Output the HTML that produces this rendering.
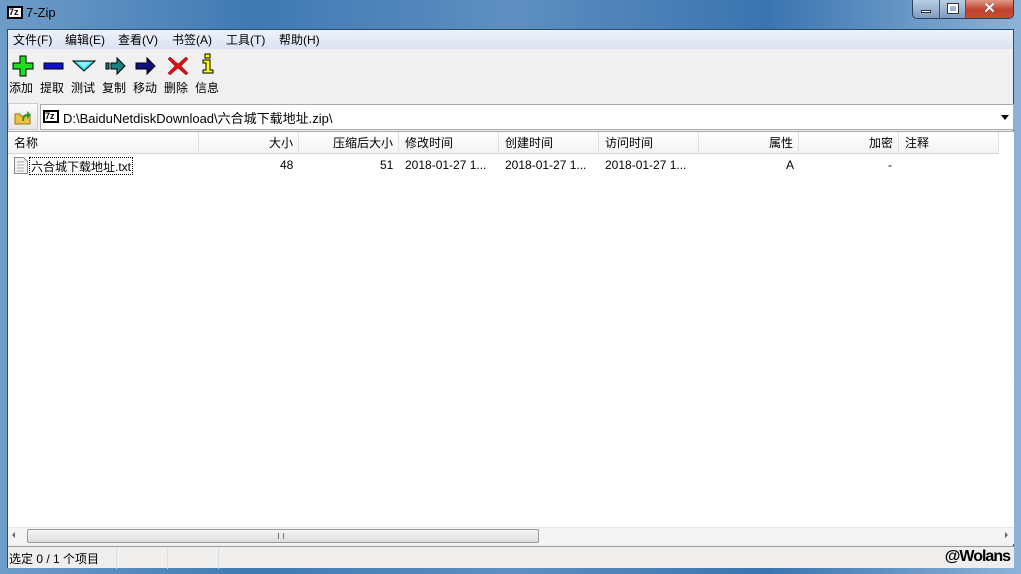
<!DOCTYPE html>
<html><head><meta charset="utf-8"><style>
*{margin:0;padding:0;box-sizing:border-box}
body{width:1021px;height:574px;overflow:hidden;font-family:"Liberation Sans","Noto Sans CJK SC",sans-serif;font-size:12px;color:#000;background:#5a8bbd;position:relative}
.frame{position:absolute;left:0;top:0;width:1021px;height:574px;background:linear-gradient(90deg,#6d9cc9 0%,#3f79b3 25%,#5e8fc0 50%,#3a74b0 75%,#8db3d8 100%)}
.title{position:absolute;left:26px;top:5px;font-size:13px;color:#000}
.client{position:absolute;left:7px;top:29px;width:1007px;height:539px;background:#f0f0f0;border:1px solid #2c4a6e}
.menu{position:absolute;left:0;top:0;width:100%;height:19px;background:linear-gradient(#eef2fa,#dbe2f2);}
.menu span{position:absolute;top:1px}
.tb span{position:absolute;top:49px;font-size:12px}
.addr{position:absolute;left:32px;top:74px;width:974px;height:26px;background:#fff;border:1px solid #aaa}
.list{position:absolute;left:0;top:101px;width:1006px;height:397px;background:#fff;border-top:1px solid #aaa}
.hdr{position:absolute;left:0;top:0;width:990px;height:22px;background:linear-gradient(#fff,#f3f3f3);border-bottom:1px solid #d5d5d5}
.hdr div{position:absolute;top:2px;height:16px;white-space:nowrap}
.row div{position:absolute;top:3px;height:16px;white-space:nowrap}
.sep{position:absolute;top:0;width:1px;height:22px;background:#e0e0e0}
.status{position:absolute;left:0;top:516px;width:1006px;height:22px;background:#f0eeec;border-top:1px solid #999}
</style></head><body>
<div class="frame"></div>
<div style="position:absolute;left:7px;top:6px;width:16px;height:13px;background:#000;border:1px solid #000"><div style="position:absolute;left:1px;top:1px;width:12px;height:9px;background:#fff;font:bold 9px 'Liberation Sans';line-height:9px;color:#000">7z</div></div>
<div class="title">7-Zip</div>
<div style="position:absolute;left:912px;top:0;width:102px;height:19px;border:1px solid #2a3f5c;border-top:none;border-radius:0 0 5px 5px;overflow:hidden;display:flex">
<div style="width:27px;background:linear-gradient(#b9cde4,#7e9cc0);border-right:1px solid #3b5575;position:relative"><div style="position:absolute;left:8px;top:10px;width:10px;height:3px;background:#fff;border:1px solid #333"></div></div>
<div style="width:26px;background:linear-gradient(#b9cde4,#7e9cc0);border-right:1px solid #3b5575;position:relative"><div style="position:absolute;left:8px;top:4px;width:10px;height:9px;border:2px solid #fff;outline:1px solid #333"></div></div>
<div style="flex:1;background:linear-gradient(#e19a86,#c0412a 55%,#c84c34);color:#fff;font:bold 15px 'Liberation Sans';text-align:center;line-height:18px;text-shadow:0 0 1px #333">✕</div></div>
<div class="client">
<div class="menu"><span style="left:5px">文件(F)</span><span style="left:57px">编辑(E)</span><span style="left:110px">查看(V)</span><span style="left:164px">书签(A)</span><span style="left:218px">工具(T)</span><span style="left:271px">帮助(H)</span></div>
<div class="tb">
<svg style="position:absolute;left:4px;top:25px" width="22" height="22"><path d="M8 1h6v7h7v6h-7v7h-6v-7h-7v-6h7z" fill="#1ee01e" stroke="#000"/></svg>
<svg style="position:absolute;left:35px;top:25px" width="22" height="22"><rect x="1" y="8" width="19" height="6" fill="#1010d0" stroke="#000"/></svg>
<svg style="position:absolute;left:64px;top:25px" width="24" height="22"><path d="M1 6h22l-11 10z" fill="#20e0f0" stroke="#000"/><path d="M5 7h14l-7 6z" fill="#fff" opacity=".5"/></svg>
<svg style="position:absolute;left:97px;top:25px" width="22" height="22"><rect x="1" y="8" width="3" height="6" fill="#1a7a7a" stroke="#000"/><path d="M6 8h6v-5l8 8-8 8v-5h-6z" fill="#1a8080" stroke="#000"/></svg>
<svg style="position:absolute;left:127px;top:25px" width="22" height="22"><path d="M1 8h11v-5l8 8-8 8v-5h-11z" fill="#101080" stroke="#000"/></svg>
<svg style="position:absolute;left:159px;top:25px" width="22" height="22"><path d="M3 2l8 7 8-7 2 2-7 7 7 7-2 2-8-7-8 7-2-2 7-7-7-7z" fill="#e01010" stroke="#600" stroke-width=".5"/></svg>
<svg style="position:absolute;left:193px;top:23px" width="14" height="22"><rect x="4" y="1" width="5" height="4" fill="#ff0" stroke="#000"/><path d="M2 7h7v10h3v3h-10v-3h3v-7h-3z" fill="#ff0" stroke="#000"/></svg>
<span style="left:1px">添加</span><span style="left:32px">提取</span><span style="left:63px">测试</span><span style="left:94px">复制</span><span style="left:125px">移动</span><span style="left:156px">删除</span><span style="left:187px">信息</span></div>
<div style="position:absolute;left:0;top:73px;width:30px;height:27px;background:linear-gradient(#fafafa,#e6e6e6);border:1px solid #ccc"><svg style="position:absolute;left:5px;top:5px" width="18" height="16"><path d="M1 5h5l1 2h9v8h-15z" fill="#f0c040" stroke="#a07010"/><path d="M8 12c0-5 2-7 5-7v-3l4 4-4 4v-3c-2 0-3 2-3 5z" fill="#2a9a2a"/></svg></div>
<div class="addr"><div style="position:absolute;left:2px;top:5px;width:16px;height:13px;background:#000"><div style="position:absolute;left:2px;top:2px;width:12px;height:9px;background:#fff;font:bold 9px 'Liberation Sans';line-height:9px">7z</div></div><div style="position:absolute;left:22px;top:3px;font-size:13px">D:\BaiduNetdiskDownload\六合城下载地址.zip\</div><div style="position:absolute;right:4px;top:10px;border:4px solid transparent;border-top:5px solid #000;border-bottom:none"></div></div>
<div class="list">
<div class="hdr"><div style="left:6px">名称</div><div style="left:261px">大小</div><div style="left:325px">压缩后大小</div><div style="left:397px">修改时间</div><div style="left:497px">创建时间</div><div style="left:597px">访问时间</div><div style="left:761px">属性</div><div style="left:861px">加密</div><div style="left:897px">注释</div>
<span class="sep" style="left:190px"></span><span class="sep" style="left:290px"></span><span class="sep" style="left:390px"></span><span class="sep" style="left:490px"></span><span class="sep" style="left:590px"></span><span class="sep" style="left:690px"></span><span class="sep" style="left:790px"></span><span class="sep" style="left:890px"></span><span class="sep" style="left:990px"></span></div>
<div class="row" style="position:absolute;left:0;top:23px;width:990px;height:20px">
<svg style="position:absolute;left:6px;top:2px" width="14" height="17"><path d="M.5 .5h9l4 4v12h-13z" fill="#f4f4f4" stroke="#888"/><path d="M3 5h7M3 8h7M3 11h7M3 14h7" stroke="#aaa"/></svg>
<div style="left:21px;top:2px;border:1px dotted #000;padding:0 1px;height:18px">六合城下载地址.txt</div><div style="left:272px">48</div><div style="left:372px">51</div><div style="left:397px">2018-01-27 1...</div><div style="left:497px">2018-01-27 1...</div><div style="left:597px">2018-01-27 1...</div><div style="left:778px">A</div><div style="left:880px">-</div></div>
<div style="position:absolute;left:0;top:395px;width:1006px;height:17px;background:#f4f4f4;border-top:1px solid #e8e8e8"><div style="position:absolute;left:4px;top:4px;border:3px solid transparent;border-right:3px solid #666;border-left:none"></div><div style="position:absolute;left:19px;top:1px;width:512px;height:14px;border:1px solid #999;border-radius:2px;background:linear-gradient(#f6f6f6,#dcdcdc)"><div style="position:absolute;left:250px;top:3px;width:6px;height:6px;border-left:1px solid #777;border-right:1px solid #777"></div></div><div style="position:absolute;right:6px;top:4px;border:3px solid transparent;border-left:3px solid #666;border-right:none"></div></div>
</div>
<div class="status"><div style="position:absolute;left:1px;top:3px">选定 0 / 1 个项目</div><span class="sep" style="left:108px;background:#ddd"></span><span class="sep" style="left:159px;background:#ddd"></span><span class="sep" style="left:210px;background:#ddd"></span><div style="position:absolute;right:4px;top:1px;font:bold 16px 'Liberation Sans';color:#000;letter-spacing:-1px">@Wolans</div></div>
</div>
</body></html>
